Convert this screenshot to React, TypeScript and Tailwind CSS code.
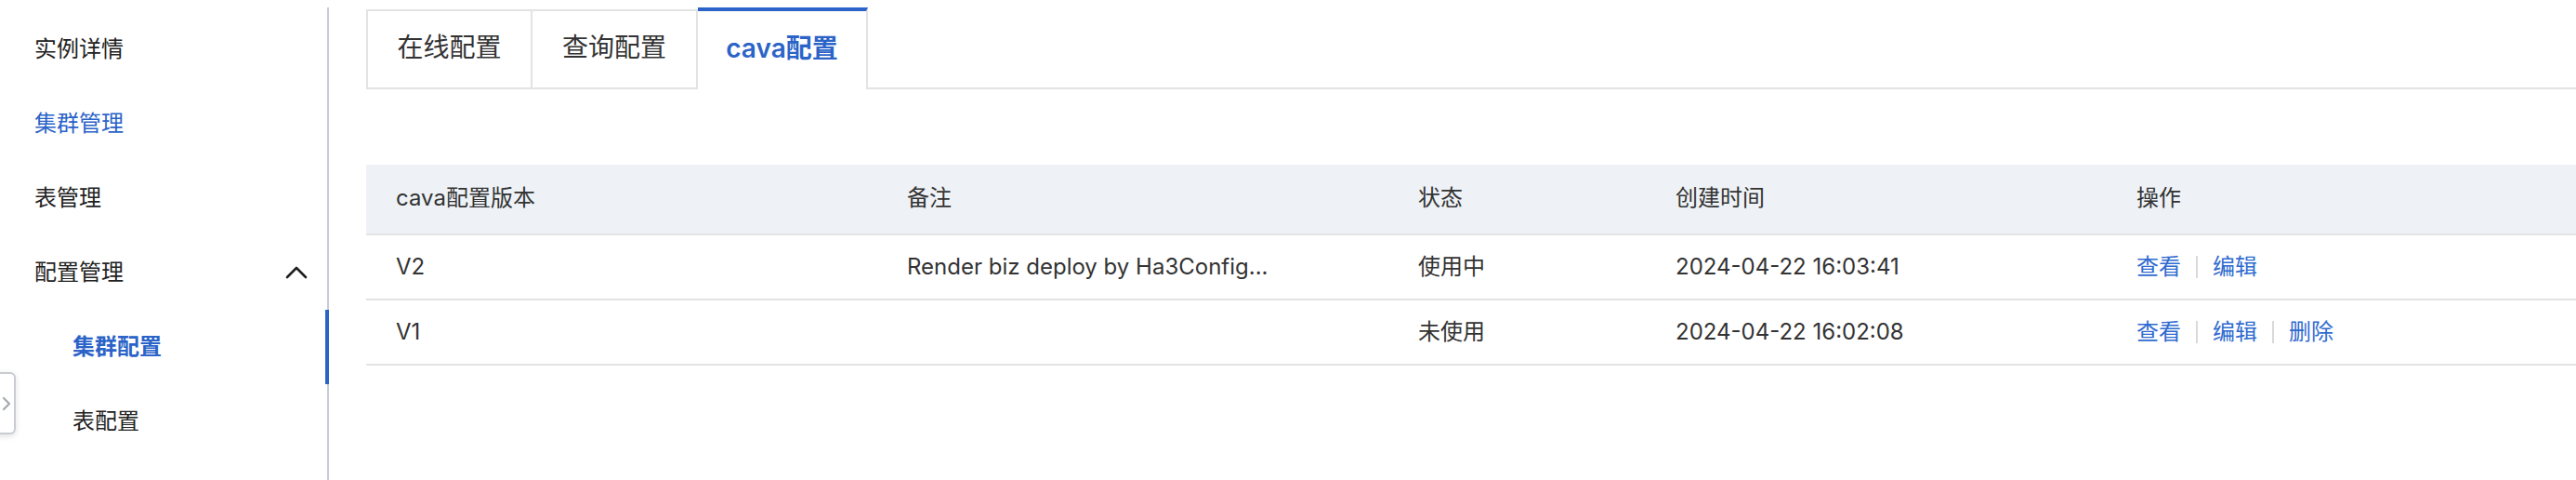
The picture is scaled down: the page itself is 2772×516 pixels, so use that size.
const menu = [
  { label: "实例详情" },
  { label: "集群管理", active: true },
  { label: "表管理" },
  { label: "配置管理", open: true },
];

const subMenu = [
  { label: "集群配置", active: true },
  { label: "表配置" },
];

const tabs = [
  { label: "在线配置" },
  { label: "查询配置" },
  { label: "cava配置", active: true },
];

const rows = [
  {
    version: "V2",
    note: "Render biz deploy by Ha3Config...",
    status: "使用中",
    created: "2024-04-22 16:03:41",
    actions: ["查看", "编辑"],
  },
  {
    version: "V1",
    note: "",
    status: "未使用",
    created: "2024-04-22 16:02:08",
    actions: ["查看", "编辑", "删除"],
  },
];

const cols = "grid grid-cols-[550px_550px_277px_496px_1fr] items-center";

function ChevronUp() {
  return (
    <svg width="24" height="14" viewBox="0 0 24 14" fill="none" stroke="#1f1f1f" strokeWidth="2.6" strokeLinecap="round" strokeLinejoin="round">
      <polyline points="2,12 12,2 22,12" />
    </svg>
  );
}

function Sidebar() {
  return (
    <aside className="relative mt-2 w-[354px] shrink-0 border-r-2 border-[#c9cdd1] pt-[5px]">
      {menu.map((item) => (
        <div
          key={item.label}
          className={`flex h-20 items-center justify-between pl-[37px] pr-[21px] text-[24px] ${
            item.active ? "text-[#2b63c8]" : "text-[#222]"
          }`}
        >
          <span>{item.label}</span>
          {item.open && <ChevronUp />}
        </div>
      ))}
      {subMenu.map((item) => (
        <div
          key={item.label}
          className={`flex h-20 items-center pl-[78px] text-[24px] ${
            item.active
              ? "-mr-[2px] border-r-4 border-[#2b63c8] font-semibold text-[#2b63c8]"
              : "text-[#222]"
          }`}
        >
          {item.label}
        </div>
      ))}

      {/* collapse handle, half hidden off the left edge */}
      <div className="absolute left-[-18px] top-[392px] flex h-[67px] w-[35px] items-center justify-center rounded-md border-2 border-[#c8ccd1] bg-white shadow-[0_2px_6px_rgba(0,0,0,0.12)]">
        <svg width="10" height="16" viewBox="0 0 10 16" fill="none" stroke="#a9adb2" strokeWidth="2.4" strokeLinecap="round" strokeLinejoin="round" className="ml-[14px]">
          <polyline points="2,2 8,8 2,14" />
        </svg>
      </div>
    </aside>
  );
}

function Tabs() {
  return (
    <div className="flex items-end border-b-2 border-[#e3e3e3]">
      {tabs.map((tab, i) =>
        tab.active ? (
          <div
            key={tab.label}
            className="-mb-[2px] flex h-[88px] w-[183px] items-center justify-center border-r-2 border-t-4 border-[#e3e3e3] border-t-[#2b63c8] bg-white pb-1 text-[28px] font-semibold text-[#2b63c8]"
          >
            {tab.label}
          </div>
        ) : (
          <div
            key={tab.label}
            className={`-mb-[2px] flex h-[86px] items-center justify-center border-2 border-[#e3e3e3] bg-white pb-1 text-[28px] text-[#333] ${
              i === 0 ? "w-[179px]" : "w-[178px] border-l-0"
            }`}
          >
            {tab.label}
          </div>
        )
      )}
    </div>
  );
}

function ConfigTable() {
  return (
    <div className="mt-[81px] text-[24px] text-[#333]">
      <div className={`${cols} h-[76px] border-b-2 border-[#e3e3e3] bg-[#eef2f6] pb-[2px]`}>
        <div className="pl-8">cava配置版本</div>
        <div className="pl-8">备注</div>
        <div className="pl-8">状态</div>
        <div className="pl-8">创建时间</div>
        <div className="pl-8">操作</div>
      </div>
      {rows.map((row) => (
        <div key={row.version} className={`${cols} h-[70px] border-b-2 border-[#e3e3e3]`}>
          <div className="pl-8">{row.version}</div>
          <div className="pl-8">{row.note}</div>
          <div className="pl-8">{row.status}</div>
          <div className="pl-8">{row.created}</div>
          <div className="flex items-center pl-8 text-[#2f6bcf]">
            {row.actions.map((a, i) => (
              <div key={a} className="flex items-center">
                {i > 0 && <span className="mx-4 h-6 w-[2px] bg-[#d9d9d9]" />}
                <span>{a}</span>
              </div>
            ))}
          </div>
        </div>
      ))}
    </div>
  );
}

export default function App() {
  return (
    <div className="flex h-[516px] w-full overflow-hidden bg-white font-[Inter,'Noto_Sans_CJK_SC',sans-serif]">
      <Sidebar />
      <main className="min-w-0 flex-1 pl-10 pt-2">
        <Tabs />
        <ConfigTable />
      </main>
    </div>
  );
}
